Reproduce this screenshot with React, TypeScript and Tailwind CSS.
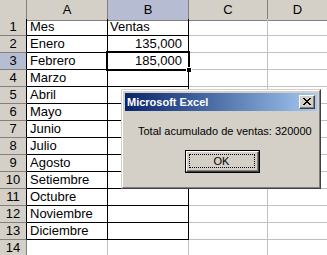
import React from "react";

const months = [
  "Mes",
  "Enero",
  "Febrero",
  "Marzo",
  "Abril",
  "Mayo",
  "Junio",
  "Julio",
  "Agosto",
  "Setiembre",
  "Octubre",
  "Noviembre",
  "Diciembre",
  "",
];

const bValues: Record<number, { text: string; right: boolean }> = {
  1: { text: "Ventas", right: false },
  2: { text: "135,000", right: true },
  3: { text: "185,000", right: true },
};

function HeaderRow() {
  return (
    <div className="grid grid-cols-[27px_81px_81px_79px_59px] h-[19px]">
      <div className="bg-[#d4d0c8] border-r border-b border-[#808080]" />
      <div className="bg-[#d4d0c8] border-r border-b border-[#808080] flex items-center justify-center">A</div>
      <div className="bg-[#b6bdd2] border-r border-b border-[#808080] flex items-center justify-center">B</div>
      <div className="bg-[#d4d0c8] border-r border-b border-[#808080] flex items-center justify-center">C</div>
      <div className="bg-[#d4d0c8] border-b border-[#808080] flex items-center justify-center">D</div>
    </div>
  );
}

function DataRow({ n }: { n: number }) {
  const inTable = n <= 13;
  const selected = n === 3;
  const b = bValues[n];
  return (
    <div className="grid grid-cols-[27px_81px_81px_79px_59px] h-[17px]">
      <div
        className={
          (selected ? "bg-[#b6bdd2] " : "bg-[#d4d0c8] ") +
          "border-b border-[#808080] border-r flex items-end justify-center leading-[16px] " +
          (inTable ? "border-r-black" : "border-r-[#808080]")
        }
      >
        {n}
      </div>
      <div
        className={
          "border-r border-b flex items-end pl-[3px] leading-[16px] whitespace-nowrap " +
          (inTable ? "border-black" : "border-[#c0c0c0]")
        }
      >
        {months[n - 1]}
      </div>
      <div
        className={
          "relative border-r border-b flex items-end leading-[16px] whitespace-nowrap " +
          (inTable ? "border-black " : "border-[#c0c0c0] ") +
          (b && b.right ? "justify-end pr-[6px]" : "pl-[2px]")
        }
      >
        {b ? b.text : ""}
        {selected && (
          <>
            <div className="absolute left-[-2px] top-[-2px] right-[-2px] bottom-[-2px] border-[2px] border-black pointer-events-none" />
            <div className="absolute right-[-4px] bottom-[-4px] w-[6px] h-[6px] bg-black border border-white" />
          </>
        )}
      </div>
      <div className="border-r border-b border-[#c0c0c0]" />
      <div className="border-b border-[#c0c0c0]" />
    </div>
  );
}

function Dialog() {
  return (
    <div className="absolute left-[121px] top-[89px] w-[200px] h-[100px] bg-[#d4d0c8] border border-t-[#d4d0c8] border-l-[#d4d0c8] border-r-[#404040] border-b-[#404040] font-['Liberation_Sans',sans-serif] text-[11px]">
      <div className="w-full h-full border border-t-white border-l-white border-r-[#808080] border-b-[#808080] p-[2px] flex flex-col">
        <div className="h-[18px] flex items-center justify-between pl-[2px] pr-[2px] bg-gradient-to-r from-[#0a246a] to-[#a6caf0]">
          <span className="text-white font-bold text-[11px] leading-none">Microsoft Excel</span>
          <div className="w-[16px] h-[14px] bg-[#d4d0c8] border border-t-white border-l-white border-r-[#404040] border-b-[#404040]">
            <div className="w-full h-full border-r border-b border-[#808080] flex items-center justify-center">
              <svg width="8" height="7" viewBox="0 0 8 7" shapeRendering="crispEdges">
                <path d="M0 0h2v1H0zM6 0h2v1H6zM1 1h2v1H1zM5 1h2v1H5zM2 2h4v1H2zM3 3h2v1H3zM2 4h4v1H2zM1 5h2v1H1zM5 5h2v1H5zM0 6h2v1H0zM6 6h2v1H6z" fill="#000" />
              </svg>
            </div>
          </div>
        </div>
        <div className="pl-[13px] pt-[14px] leading-[13px] text-black whitespace-nowrap">
          Total acumulado de ventas: 320000
        </div>
        <div className="flex justify-center mt-[12px] pl-[2px]">
          <div className="w-[75px] h-[23px] border border-black">
            <div className="w-full h-full border border-t-white border-l-white border-r-[#404040] border-b-[#404040]">
              <div className="w-full h-full border-r border-b border-[#808080] p-[2px]">
                <div className="w-full h-full border border-dotted border-black flex items-center justify-center leading-none">
                  OK
                </div>
              </div>
            </div>
          </div>
        </div>
      </div>
    </div>
  );
}

export default function App() {
  return (
    <div className="relative w-[327px] h-[255px] overflow-hidden bg-white font-['Liberation_Sans',Arial,sans-serif] text-[13px] text-black">
      <HeaderRow />
      {Array.from({ length: 14 }, (_, i) => (
        <DataRow key={i} n={i + 1} />
      ))}
      <Dialog />
    </div>
  );
}
